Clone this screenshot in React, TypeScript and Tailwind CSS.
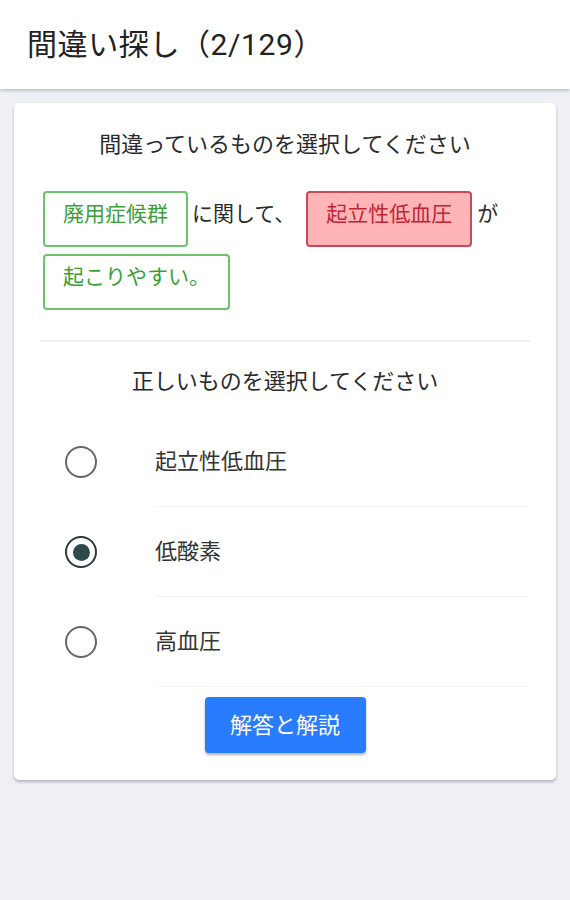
import { useState } from "react";

const options = ["起立性低血圧", "低酸素", "高血圧"];

export default function App() {
  const [selected, setSelected] = useState(1);

  return (
    <div className="min-h-[900px] bg-[#eef0f6] font-['Roboto','Noto_Sans_CJK_JP',sans-serif] text-[#2a2a2a]">
      <header className="h-[89px] bg-white flex items-center pl-[27px] shadow-[0_2px_3px_rgba(0,0,0,0.18)]">
        <h1 className="text-[30px] tracking-[0.6px] text-[#222]">間違い探し（2/129）</h1>
      </header>

      <div className="px-[14px] pt-[14px]">
        <div className="bg-white rounded-[5px] shadow-[0_2px_3px_rgba(0,0,0,0.25)] px-[26px] pt-[26px] pb-[27px]">
          <p className="text-center text-[22px] leading-[32px]">間違っているものを選択してください</p>

          <div className="flex flex-wrap items-start gap-y-[7px] mt-[30px] ml-[3px] text-[21px] leading-[28px]">
            <span className="h-[56px] px-[18px] pt-[7px] border-2 border-[#6cc36c] rounded-[4px] text-[#3a9f3a]">廃用症候群</span>
            <span className="pt-[9px] ml-[4px] mr-[11px]">に関して、</span>
            <span className="h-[56px] px-[18px] pt-[7px] border-2 border-[#c94a58] bg-[#ffb4b6] rounded-[4px] text-[#c02536]">起立性低血圧</span>
            <span className="pt-[9px] ml-[5px]">が</span>
            <span className="h-[56px] px-[18px] pt-[7px] border-2 border-[#6cc36c] rounded-[4px] text-[#3a9f3a]">起こりやすい。</span>
          </div>

          <div className="h-[2px] bg-[#efefef] mt-[30px]" />

          <p className="text-center text-[22px] leading-[32px] mt-[24px]">正しいものを選択してください</p>

          <div className="mt-[19px]">
            {options.map((o, i) => (
              <button key={o} onClick={() => setSelected(i)} className="w-full h-[90px] flex items-center text-left">
                <span className="w-[115px] flex justify-start pl-[25px]">
                  <span className={`w-[32px] h-[32px] rounded-full border-[2.5px] flex items-center justify-center ${selected === i ? "border-[#2b3a3a]" : "border-[#666]"}`}>
                    {selected === i && <span className="w-[17px] h-[17px] rounded-full bg-[#2e4a4a]" />}
                  </span>
                </span>
                <span className="flex-1 h-full flex items-center border-b border-[#f4f4f6] text-[22px] text-[#333] mr-[2px]">{o}</span>
              </button>
            ))}
          </div>

          <div className="flex justify-center mt-[10px]">
            <button className="w-[161px] h-[56px] rounded-[4px] bg-[#2a7cff] text-white text-[22px] shadow-[0_2px_3px_rgba(0,0,0,0.3)]">解答と解説</button>
          </div>
        </div>
      </div>
    </div>
  );
}
